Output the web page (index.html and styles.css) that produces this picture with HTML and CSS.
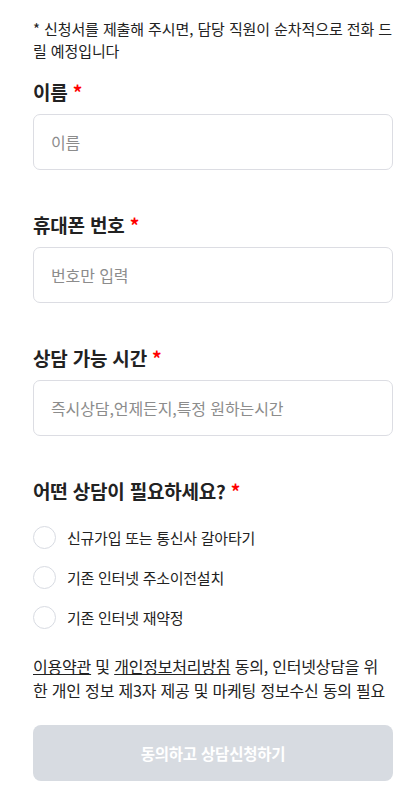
FILE: index.html
```html
<!DOCTYPE html>
<html lang="ko">
<head>
<meta charset="utf-8">
<link rel="stylesheet" href="styles.css">
</head>
<body>
<main class="form">
  <p class="notice">* 신청서를 제출해 주시면, 담당 직원이 순차적으로 전화 드릴 예정입니다</p>

  <section class="field first">
    <h2 class="label">이름 <span class="req">*</span></h2>
    <div class="input"><span class="ph">이름</span></div>
  </section>

  <section class="field">
    <h2 class="label">휴대폰 번호 <span class="req">*</span></h2>
    <div class="input"><span class="ph">번호만 입력</span></div>
  </section>

  <section class="field">
    <h2 class="label">상담 가능 시간 <span class="req">*</span></h2>
    <div class="input"><span class="ph">즉시상담,언제든지,특정 원하는시간</span></div>
  </section>

  <section class="field">
    <h2 class="label">어떤 상담이 필요하세요? <span class="req">*</span></h2>
    <ul class="options">
      <li class="option"><span class="radio"></span><span>신규가입 또는 통신사 갈아타기</span></li>
      <li class="option"><span class="radio"></span><span>기존 인터넷 주소이전설치</span></li>
      <li class="option"><span class="radio"></span><span>기존 인터넷 재약정</span></li>
    </ul>
  </section>

  <p class="agree"><a class="link">이용약관</a> 및 <a class="link">개인정보처리방침</a> 동의, 인터넷상담을 위한 개인 정보 제3자 제공 및 마케팅 정보수신 동의 필요</p>

  <button class="submit" type="button">동의하고 상담신청하기</button>
</main>
</body>
</html>
```
FILE: styles.css
```css
* { box-sizing: border-box; }
html, body { margin: 0; padding: 0; background: #fff; }
body {
  font-family: "Noto Sans CJK KR", "Noto Sans", sans-serif;
  color: #222;
}
.form {
  padding: 18px 25px 0 33px;
  display: flex;
  flex-direction: column;
}
.notice {
  margin: 0 -6px 0 0;
  font-size: 15px;
  line-height: 22px;
  color: #222;
  letter-spacing: -0.1px;
}
.field { margin-top: 43px; }
.field.first { margin-top: 18px; }
.label {
  margin: 0 0 10px;
  font-size: 19px;
  font-weight: 700;
  line-height: 24px;
  letter-spacing: -0.2px;
  color: #222;
}
.req { color: #ff0000; }
.input {
  height: 56px;
  border: 1px solid #dcdde3;
  border-radius: 7px;
  display: flex;
  align-items: center;
  padding: 0 17px;
}
.ph {
  color: #8c8c8c;
  font-size: 16px;
  letter-spacing: -0.1px;
}
.options {
  list-style: none;
  margin: 23px 0 0;
  padding: 0;
  display: flex;
  flex-direction: column;
  gap: 17px;
}
.option {
  display: flex;
  align-items: center;
  gap: 11px;
  font-size: 15px;
  line-height: 23px;
  letter-spacing: -0.25px;
  color: #222;
}
.radio {
  width: 23px;
  height: 23px;
  border: 1px solid #d8dbe2;
  border-radius: 50%;
  flex: none;
}
.agree {
  margin: 25px 4px 0 0;
  font-size: 16px;
  line-height: 24px;
  letter-spacing: -0.2px;
  color: #222;
}
.link { text-decoration: underline; color: #222; }
.submit {
  margin-top: 23px;
  height: 56px;
  border: 0;
  border-radius: 8px;
  background: #d7dbe1;
  color: #fff;
  font-family: inherit;
  font-size: 15.5px;
  font-weight: 700;
  letter-spacing: -0.2px;
}
```
